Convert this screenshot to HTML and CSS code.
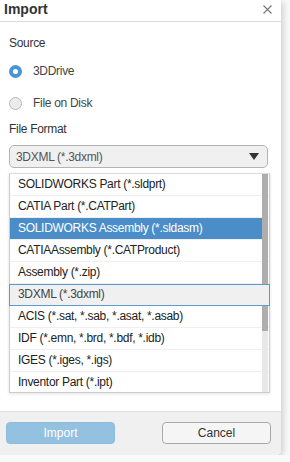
FILE: index.html
```html
<!DOCTYPE html>
<html lang="en">
<head>
  <meta charset="UTF-8">
  <title>Import</title>
  <link rel="stylesheet" href="styles.css">
</head>
<body>
  <div class="dialog">

    <!-- Header -->
    <div class="dialog-header">
      <span class="dialog-title">Import</span>
      <svg class="close-btn" width="9" height="9" viewBox="0 0 9 9">
        <path d="M0.5 0.5 L8.5 8.5 M8.5 0.5 L0.5 8.5" stroke="#777" stroke-width="1.1" fill="none"/>
      </svg>
    </div>

    <div class="dialog-body">
      <div class="field-label">Source</div>

      <label class="radio-row">
        <span class="radio checked"></span>
        <span>3DDrive</span>
      </label>
      <label class="radio-row second">
        <span class="radio"></span>
        <span>File on Disk</span>
      </label>

      <div class="field-label format-label">File Format</div>

      <div class="select-box">
        <span>3DXML (*.3dxml)</span>
        <span class="select-arrow"></span>
      </div>

      <!-- Open dropdown -->
      <div class="list-box">
        <div class="list-item">SOLIDWORKS Part (*.sldprt)</div>
        <div class="list-item">CATIA Part (*.CATPart)</div>
        <div class="list-item selected">SOLIDWORKS Assembly (*.sldasm)</div>
        <div class="list-item">CATIAAssembly (*.CATProduct)</div>
        <div class="list-item">Assembly (*.zip)</div>
        <div class="list-item focused">3DXML (*.3dxml)</div>
        <div class="list-item">ACIS (*.sat, *.sab, *.asat, *.asab)</div>
        <div class="list-item">IDF (*.emn, *.brd, *.bdf, *.idb)</div>
        <div class="list-item">IGES (*.iges, *.igs)</div>
        <div class="list-item">Inventor Part (*.ipt)</div>
        <div class="scrollbar"><div class="scroll-thumb"></div></div>
      </div>
    </div>

    <!-- Footer -->
    <div class="dialog-footer">
      <button class="btn btn-primary">Import</button>
      <button class="btn btn-default">Cancel</button>
    </div>

  </div>
</body>
</html>
```

FILE: styles.css
```css
* {
  box-sizing: border-box;
}

body {
  margin: 0;
  padding: 0;
  background-color: #f9f9f9;
  font-family: "Liberation Sans", Arial, sans-serif;
  font-size: 12px;
  letter-spacing: -0.3px;
  color: #333;
}

.dialog {
  width: 281px;
  height: 455px;
  background-color: #fff;
  border-radius: 0 0 5px 0;
  box-shadow: 2px 2px 7px rgba(0, 0, 0, 0.18);
  display: flex;
  flex-direction: column;
  overflow: hidden;
}

.dialog-header {
  height: 22px;
  padding: 0 9px 0 4px;
  display: flex;
  align-items: center;
  justify-content: space-between;
  border-bottom: 1px solid #dcdcdc;
}

.dialog-title {
  font-size: 14px;
  font-weight: bold;
  letter-spacing: 0;
  color: #333;
  line-height: 18px;
  margin-top: -3px;
}

.close-btn {
  margin-top: -2px;
}

.dialog-body {
  flex: 1;
  padding: 13px 9px 0 9px;
}

.field-label {
  line-height: 16px;
  color: #333;
}

.format-label {
  margin-top: 8px;
}

.radio-row {
  display: flex;
  align-items: center;
  height: 20px;
  margin-top: 10px;
  color: #444;
}

.radio-row.second {
  margin-top: 12px;
}

.radio {
  width: 13px;
  height: 13px;
  border-radius: 50%;
  border: 1px solid #b9b9b9;
  background-color: #ebebeb;
  margin: 0 11px 0 0;
}

.radio.checked {
  border: 4px solid #4c95d4;
  background-color: #fff;
}

.select-box {
  margin-top: 8px;
  width: 259px;
  height: 23px;
  border: 1px solid #b4b4b4;
  border-radius: 5px;
  background-color: #f0f0f0;
  padding: 0 6px;
  display: flex;
  align-items: center;
  justify-content: space-between;
  color: #555;
}

.select-arrow {
  width: 0;
  height: 0;
  border-left: 5px solid transparent;
  border-right: 5px solid transparent;
  border-top: 7px solid #333;
  margin-right: 2px;
}

.list-box {
  position: relative;
  margin-top: 5px;
  width: 261px;
  height: 220px;
  border: 1px solid #ccc;
  border-top: 1px solid #ddd;
  background-color: #fff;
  box-shadow: 0 1px 3px rgba(0, 0, 0, 0.12);
}

.list-item {
  height: 22px;
  line-height: 21px;
  padding-left: 8px;
  color: #222;
  border-bottom: 1px solid #efefef;
  white-space: nowrap;
}

.list-item:last-of-type {
  border-bottom: none;
}

.list-item.selected {
  background-color: #4a8dc8;
  color: #fff;
  margin-right: 7px;
}

.list-item.focused {
  position: relative;
  z-index: 2;
  background-color: #f0f0f0;
  color: #444;
  border: 1px solid #5b9bd0;
  line-height: 19px;
  margin: 0 -1px 0 -1px;
  padding-left: 8px;
}

/* Scrollbar overlays the list */
.scrollbar {
  position: absolute;
  top: 0;
  right: 1px;
  width: 6px;
  height: 100%;
  background-color: #e8e8e8;
}

.scroll-thumb {
  height: 157px;
  background-color: #aeaeae;
}

.dialog-footer {
  height: 44px;
  background-color: #f0f0f0;
  border-top: 1px solid #dedede;
  padding: 10px 10px 0 6px;
  display: flex;
  justify-content: space-between;
  align-items: flex-start;
}

.btn {
  width: 109px;
  height: 22px;
  font-family: "Liberation Sans", Arial, sans-serif;
  font-size: 12px;
  border-radius: 4px;
  padding: 0;
}

.btn-primary {
  background-color: #94c1e0;
  border: 1px solid #8ebcdc;
  color: #fff;
}

.btn-default {
  background-color: #f5f5f5;
  border: 1px solid #a9a9a9;
  color: #333;
}
```
